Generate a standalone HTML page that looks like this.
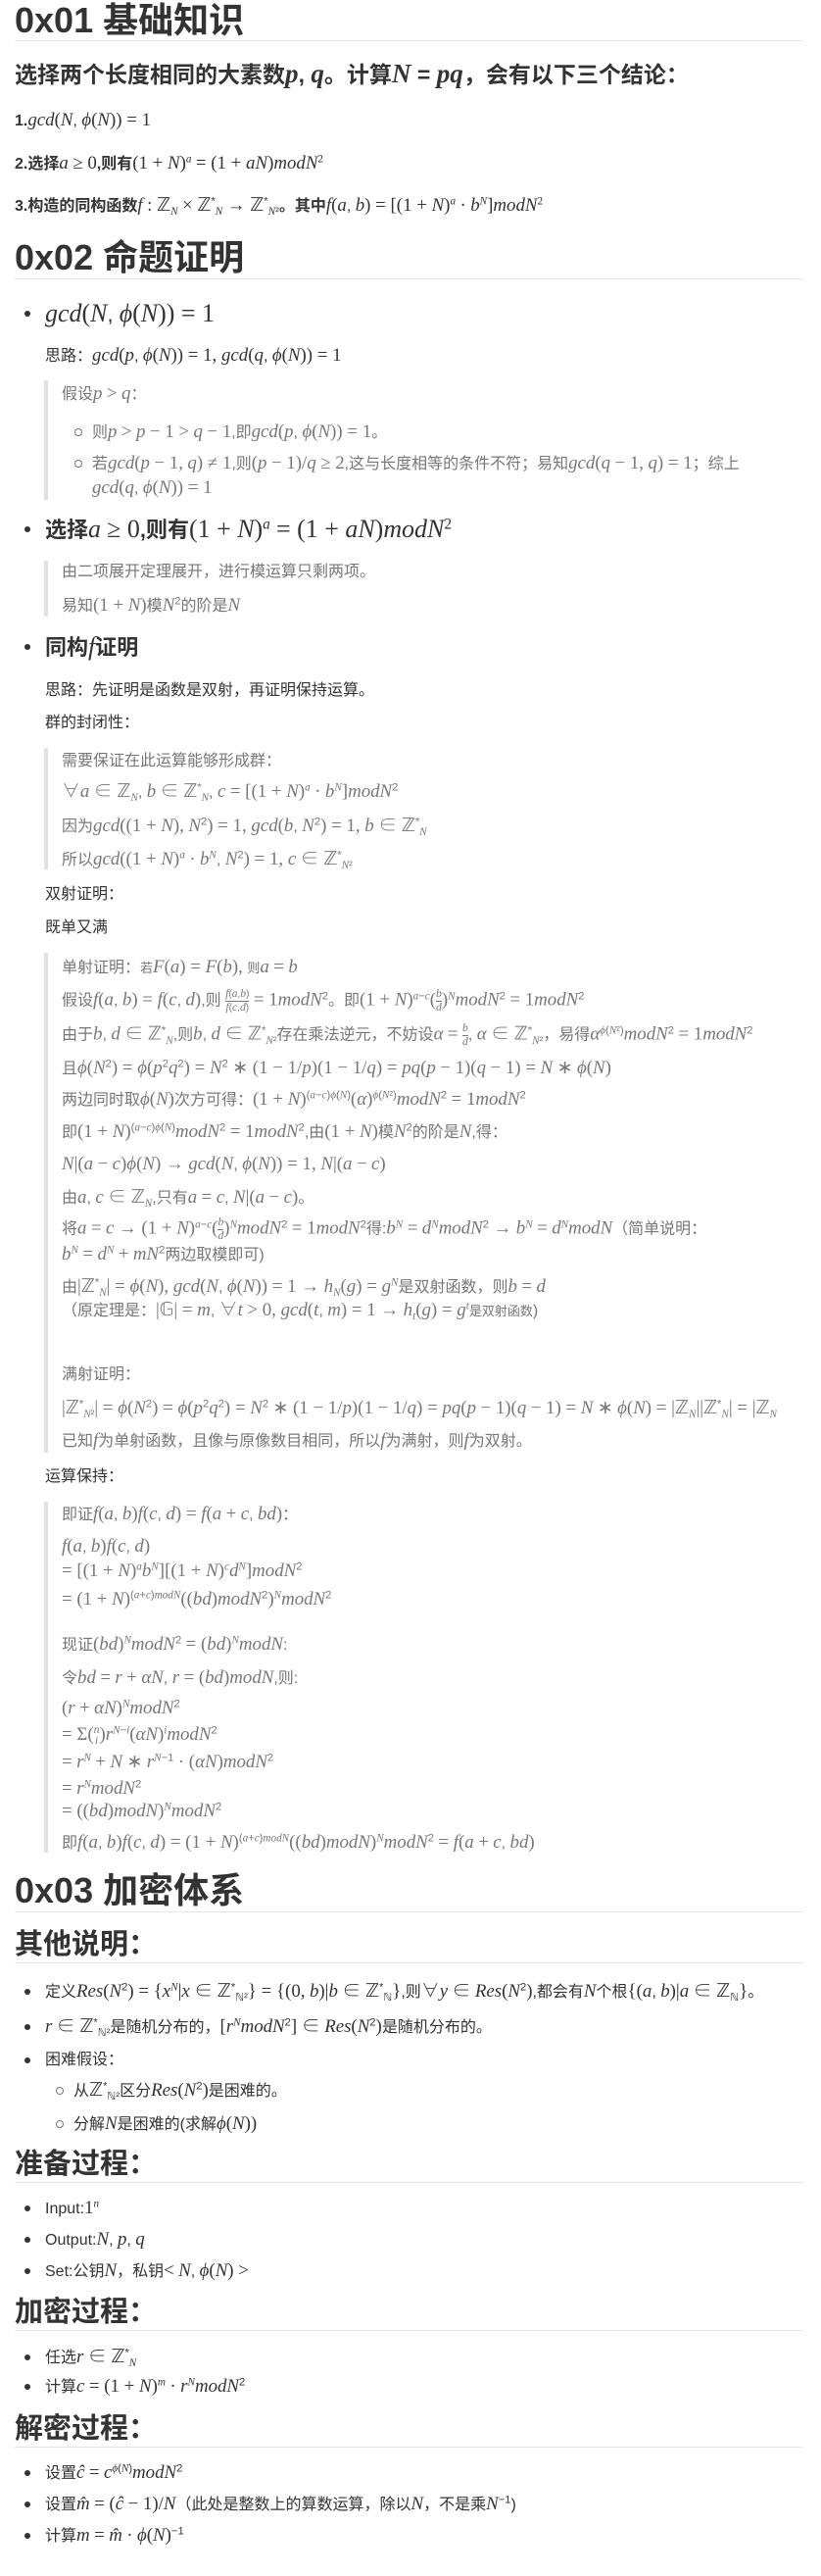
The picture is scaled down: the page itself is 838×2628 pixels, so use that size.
<!DOCTYPE html>
<html><head><meta charset="utf-8">
<style>
html,body{margin:0;padding:0;background:#fff;}
body{width:838px;height:2628px;position:relative;overflow:hidden;font-family:"Liberation Sans","Noto Sans CJK SC",sans-serif;color:#333;}
.t{position:absolute;white-space:nowrap;font-size:16px;line-height:24px;}
.g{color:#777;}
i,.m{font-family:"Liberation Serif","Noto Serif CJK SC",serif;font-size:1.18em;}
.m{font-style:normal;}
sup,sub{font-size:0.7em;line-height:0;}
sup i,sub i,sup .m,sub .m{font-size:1em;}
.h1{font-size:36px;font-weight:bold;line-height:42px;}
.h2{font-size:29px;font-weight:bold;line-height:36px;}
.hr{position:absolute;left:15px;width:805px;height:1px;background:#e6e6e6;}
.bq{position:absolute;left:45px;width:4px;background:#dfe2e5;}
.b{position:absolute;width:6px;height:6px;border-radius:50%;background:#333;}
.c{position:absolute;width:6px;height:6px;border-radius:50%;border:1px solid #777;}
.bold{font-weight:bold;}
.fr{display:inline-block;vertical-align:middle;text-align:center;font-size:0.62em;line-height:1.1;}
.fr span{display:block;}
.fr span:first-child{border-bottom:1px solid currentColor;}
</style></head><body>

<div class="t h1" style="left:15px;top:0px;">0x01 基础知识</div>
<div class="hr" style="top:41px;"></div>
<div class="t bold" style="left:15px;top:60px;font-size:23px;line-height:30px;">选择两个长度相同的大素数<i>p</i>, <i>q</i>。计算<i>N</i> = <i>pq</i>，会有以下三个结论：</div>
<div class="t bold" style="left:15px;top:111px;">1.<span style="font-weight:normal"><i>gcd</i><span class="m">(</span><i>N</i>, <i>ϕ</i><span class="m">(</span><i>N</i><span class="m">)) = 1</span></span></div>
<div class="t bold" style="left:15px;top:155px;">2.选择<span style="font-weight:normal"><i>a</i> <span class="m">≥ 0</span></span>,则有<span style="font-weight:normal"><span class="m">(1 + </span><i>N</i><span class="m">)</span><sup><i>a</i></sup> <span class="m">= (1 + </span><i>aN</i><span class="m">)</span><i>modN</i><sup><span class="m">2</span></sup></span></div>
<div class="t bold" style="left:15px;top:198px;">3.构造的同构函数<span style="font-weight:normal"><i>f</i> <span class="m">: ℤ</span><sub><i>N</i></sub> <span class="m">× ℤ</span><sup>*</sup><sub><i>N</i></sub> <span class="m">→ ℤ</span><sup>*</sup><sub><i>N</i>²</sub></span>。其中<span style="font-weight:normal"><i>f</i><span class="m">(</span><i>a</i>, <i>b</i><span class="m">) = [(1 + </span><i>N</i><span class="m">)</span><sup><i>a</i></sup> <span class="m">·</span> <i>b</i><sup><i>N</i></sup><span class="m">]</span><i>modN</i><sup><span class="m">2</span></sup></span></div>

<div class="t h1" style="left:15px;top:242px;">0x02 命题证明</div>
<div class="hr" style="top:284px;"></div>
<div class="b" style="left:25px;top:317px;"></div>
<div class="t" style="left:46px;top:305px;font-size:22px;line-height:30px;"><i>gcd</i><span class="m">(</span><i>N</i>, <i>ϕ</i><span class="m">(</span><i>N</i><span class="m">)) = 1</span></div>
<div class="t" style="left:46px;top:351px;">思路：<i>gcd</i><span class="m">(</span><i>p</i>, <i>ϕ</i><span class="m">(</span><i>N</i><span class="m">)) = 1, </span><i>gcd</i><span class="m">(</span><i>q</i>, <i>ϕ</i><span class="m">(</span><i>N</i><span class="m">)) = 1</span></div>
<div class="bq" style="top:388px;height:122px;"></div>
<div class="t g" style="left:63px;top:390px;">假设<i>p</i> <span class="m">&gt;</span> <i>q</i>：</div>
<div class="c" style="left:76px;top:437px;"></div>
<div class="t g" style="left:94px;top:429px;">则<i>p</i> <span class="m">&gt;</span> <i>p</i> <span class="m">− 1 &gt;</span> <i>q</i> <span class="m">− 1</span>,即<i>gcd</i><span class="m">(</span><i>p</i>, <i>ϕ</i><span class="m">(</span><i>N</i><span class="m">)) = 1</span>。</div>
<div class="c" style="left:76px;top:469px;"></div>
<div class="t g" style="left:94px;top:461px;">若<i>gcd</i><span class="m">(</span><i>p</i> <span class="m">− 1,</span> <i>q</i><span class="m">) ≠ 1</span>,则<span class="m">(</span><i>p</i> <span class="m">− 1)/</span><i>q</i> <span class="m">≥ 2</span>,这与长度相等的条件不符；易知<i>gcd</i><span class="m">(</span><i>q</i> <span class="m">− 1,</span> <i>q</i><span class="m">) = 1</span>；综上</div>
<div class="t g" style="left:94px;top:486px;"><i>gcd</i><span class="m">(</span><i>q</i>, <i>ϕ</i><span class="m">(</span><i>N</i><span class="m">)) = 1</span></div>

<div class="b" style="left:25px;top:537px;"></div>
<div class="t bold" style="left:46px;top:525px;font-size:22px;line-height:30px;">选择<span style="font-weight:normal"><i>a</i> <span class="m">≥ 0</span></span>,则有<span style="font-weight:normal"><span class="m">(1 + </span><i>N</i><span class="m">)</span><sup><i>a</i></sup> <span class="m">= (1 + </span><i>aN</i><span class="m">)</span><i>modN</i><sup><span class="m">2</span></sup></span></div>
<div class="bq" style="top:572px;height:57px;"></div>
<div class="t g" style="left:63px;top:572px;">由二项展开定理展开，进行模运算只剩两项。</div>
<div class="t g" style="left:63px;top:606px;">易知<span class="m">(1 + </span><i>N</i><span class="m">)</span>模<i>N</i><sup>2</sup>的阶是<i>N</i></div>

<div class="b" style="left:25px;top:657px;"></div>
<div class="t bold" style="left:46px;top:645px;font-size:22px;line-height:30px;">同构<i style="font-weight:normal">f</i>证明</div>
<div class="t" style="left:46px;top:693px;">思路：先证明是函数是双射，再证明保持运算。</div>
<div class="t" style="left:46px;top:726px;">群的封闭性：</div>
<div class="bq" style="top:763px;height:124px;"></div>
<div class="t g" style="left:63px;top:765px;">需要保证在此运算能够形成群：</div>
<div class="t g" style="left:63px;top:796px;"><span class="m">∀</span><i>a</i> <span class="m">∈ ℤ</span><sub><i>N</i></sub>, <i>b</i> <span class="m">∈ ℤ</span><sup>*</sup><sub><i>N</i></sub>, <i>c</i> <span class="m">= [(1 + </span><i>N</i><span class="m">)</span><sup><i>a</i></sup> <span class="m">·</span> <i>b</i><sup><i>N</i></sup><span class="m">]</span><i>modN</i><sup>2</sup></div>
<div class="t g" style="left:63px;top:831px;">因为<i>gcd</i><span class="m">((1 + </span><i>N</i><span class="m">),</span> <i>N</i><sup>2</sup><span class="m">) = 1, </span><i>gcd</i><span class="m">(</span><i>b</i>, <i>N</i><sup>2</sup><span class="m">) = 1, </span><i>b</i> <span class="m">∈ ℤ</span><sup>*</sup><sub><i>N</i></sub></div>
<div class="t g" style="left:63px;top:865px;">所以<i>gcd</i><span class="m">((1 + </span><i>N</i><span class="m">)</span><sup><i>a</i></sup> <span class="m">·</span> <i>b</i><sup><i>N</i></sup>, <i>N</i><sup>2</sup><span class="m">) = 1, </span><i>c</i> <span class="m">∈ ℤ</span><sup>*</sup><sub><i>N</i>²</sub></div>
<div class="t" style="left:46px;top:901px;">双射证明：</div>
<div class="t" style="left:46px;top:935px;">既单又满</div>

<div class="bq" style="top:972px;height:510px;"></div>
<div class="t g" style="left:63px;top:975px;">单射证明：<span style="font-size:13px">若</span><i>F</i><span class="m">(</span><i>a</i><span class="m">) = </span><i>F</i><span class="m">(</span><i>b</i><span class="m">),</span> <span style="font-size:13px">则</span><i>a</i> <span class="m">=</span> <i>b</i></div>
<div class="t g" style="left:63px;top:1008px;">假设<i>f</i><span class="m">(</span><i>a</i>, <i>b</i><span class="m">) = </span><i>f</i><span class="m">(</span><i>c</i>, <i>d</i><span class="m">)</span>,则 <span class="fr"><span><i>f</i>(<i>a</i>,<i>b</i>)</span><span><i>f</i>(<i>c</i>,<i>d</i>)</span></span> <span class="m">= 1</span><i>modN</i><sup>2</sup>。即<span class="m">(1 + </span><i>N</i><span class="m">)</span><sup><i>a</i>−<i>c</i></sup><span class="m">(</span><span class="fr"><span><i>b</i></span><span><i>d</i></span></span><span class="m">)</span><sup><i>N</i></sup><i>modN</i><sup>2</sup> <span class="m">= 1</span><i>modN</i><sup>2</sup></div>
<div class="t g" style="left:63px;top:1043px;">由于<i>b</i>, <i>d</i> <span class="m">∈ ℤ</span><sup>*</sup><sub><i>N</i></sub>,则<i>b</i>, <i>d</i> <span class="m">∈ ℤ</span><sup>*</sup><sub><i>N</i>²</sub>存在乘法逆元，不妨设<i>α</i> <span class="m">=</span> <span class="fr"><span><i>b</i></span><span><i>d</i></span></span>, <i>α</i> <span class="m">∈ ℤ</span><sup>*</sup><sub><i>N</i>²</sub>，易得<i>α</i><sup><i>ϕ</i>(<i>N</i>²)</sup><i>modN</i><sup>2</sup> <span class="m">= 1</span><i>modN</i><sup>2</sup></div>
<div class="t g" style="left:63px;top:1078px;">且<i>ϕ</i><span class="m">(</span><i>N</i><sup>2</sup><span class="m">) = </span><i>ϕ</i><span class="m">(</span><i>p</i><sup>2</sup><i>q</i><sup>2</sup><span class="m">) = </span><i>N</i><sup>2</sup> <span class="m">∗ (1 − 1/</span><i>p</i><span class="m">)(1 − 1/</span><i>q</i><span class="m">) = </span><i>pq</i><span class="m">(</span><i>p</i> <span class="m">− 1)(</span><i>q</i> <span class="m">− 1) = </span><i>N</i> <span class="m">∗</span> <i>ϕ</i><span class="m">(</span><i>N</i><span class="m">)</span></div>
<div class="t g" style="left:63px;top:1110px;">两边同时取<i>ϕ</i><span class="m">(</span><i>N</i><span class="m">)</span>次方可得：<span class="m">(1 + </span><i>N</i><span class="m">)</span><sup>(<i>a</i>−<i>c</i>)<i>ϕ</i>(<i>N</i>)</sup><span class="m">(</span><i>α</i><span class="m">)</span><sup><i>ϕ</i>(<i>N</i>²)</sup><i>modN</i><sup>2</sup> <span class="m">= 1</span><i>modN</i><sup>2</sup></div>
<div class="t g" style="left:63px;top:1143px;">即<span class="m">(1 + </span><i>N</i><span class="m">)</span><sup>(<i>a</i>−<i>c</i>)<i>ϕ</i>(<i>N</i>)</sup><i>modN</i><sup>2</sup> <span class="m">= 1</span><i>modN</i><sup>2</sup>,由<span class="m">(1 + </span><i>N</i><span class="m">)</span>模<i>N</i><sup>2</sup>的阶是<i>N</i>,得：</div>
<div class="t g" style="left:63px;top:1176px;"><i>N</i><span class="m">|(</span><i>a</i> <span class="m">−</span> <i>c</i><span class="m">)</span><i>ϕ</i><span class="m">(</span><i>N</i><span class="m">) →</span> <i>gcd</i><span class="m">(</span><i>N</i>, <i>ϕ</i><span class="m">(</span><i>N</i><span class="m">)) = 1, </span><i>N</i><span class="m">|(</span><i>a</i> <span class="m">−</span> <i>c</i><span class="m">)</span></div>
<div class="t g" style="left:63px;top:1210px;">由<i>a</i>, <i>c</i> <span class="m">∈ ℤ</span><sub><i>N</i></sub>,只有<i>a</i> <span class="m">=</span> <i>c</i>, <i>N</i><span class="m">|(</span><i>a</i> <span class="m">−</span> <i>c</i><span class="m">)</span>。</div>
<div class="t g" style="left:63px;top:1241px;">将<i>a</i> <span class="m">=</span> <i>c</i> <span class="m">→ (1 + </span><i>N</i><span class="m">)</span><sup><i>a</i>−<i>c</i></sup><span class="m">(</span><span class="fr"><span><i>b</i></span><span><i>d</i></span></span><span class="m">)</span><sup><i>N</i></sup><i>modN</i><sup>2</sup> <span class="m">= 1</span><i>modN</i><sup>2</sup>得:<i>b</i><sup><i>N</i></sup> <span class="m">=</span> <i>d</i><sup><i>N</i></sup><i>modN</i><sup>2</sup> <span class="m">→</span> <i>b</i><sup><i>N</i></sup> <span class="m">=</span> <i>d</i><sup><i>N</i></sup><i>modN</i>（简单说明：</div>
<div class="t g" style="left:63px;top:1268px;"><i>b</i><sup><i>N</i></sup> <span class="m">=</span> <i>d</i><sup><i>N</i></sup> <span class="m">+</span> <i>mN</i><sup>2</sup>两边取模即可)</div>
<div class="t g" style="left:63px;top:1301px;">由<span class="m">|ℤ</span><sup>*</sup><sub><i>N</i></sub><span class="m">| = </span><i>ϕ</i><span class="m">(</span><i>N</i><span class="m">), </span><i>gcd</i><span class="m">(</span><i>N</i>, <i>ϕ</i><span class="m">(</span><i>N</i><span class="m">)) = 1 →</span> <i>h</i><sub><i>N</i></sub><span class="m">(</span><i>g</i><span class="m">) = </span><i>g</i><sup><i>N</i></sup>是双射函数，则<i>b</i> <span class="m">=</span> <i>d</i></div>
<div class="t g" style="left:63px;top:1325px;">（原定理是：<span class="m">|𝔾| = </span><i>m</i>, <span class="m">∀</span><i>t</i> <span class="m">&gt; 0, </span><i>gcd</i><span class="m">(</span><i>t</i>, <i>m</i><span class="m">) = 1 →</span> <i>h</i><sub><i>t</i></sub><span class="m">(</span><i>g</i><span class="m">) = </span><i>g</i><sup><i>t</i></sup><span style="font-size:13px">是双射函数</span>)</div>
<div class="t g" style="left:63px;top:1391px;">满射证明：</div>
<div class="t g" style="left:63px;top:1425px;"><span class="m">|ℤ</span><sup>*</sup><sub><i>N</i>²</sub><span class="m">| = </span><i>ϕ</i><span class="m">(</span><i>N</i><sup>2</sup><span class="m">) = </span><i>ϕ</i><span class="m">(</span><i>p</i><sup>2</sup><i>q</i><sup>2</sup><span class="m">) = </span><i>N</i><sup>2</sup> <span class="m">∗ (1 − 1/</span><i>p</i><span class="m">)(1 − 1/</span><i>q</i><span class="m">) = </span><i>pq</i><span class="m">(</span><i>p</i> <span class="m">− 1)(</span><i>q</i> <span class="m">− 1) = </span><i>N</i> <span class="m">∗</span> <i>ϕ</i><span class="m">(</span><i>N</i><span class="m">) = |ℤ</span><sub><i>N</i></sub><span class="m">||ℤ</span><sup>*</sup><sub><i>N</i></sub><span class="m">| = |ℤ</span><sub><i>N</i></sub></div>
<div class="t g" style="left:63px;top:1458px;">已知<i>f</i>为单射函数，且像与原像数目相同，所以<i>f</i>为满射，则<i>f</i>为双射。</div>

<div class="t" style="left:46px;top:1495px;">运算保持：</div>
<div class="bq" style="top:1532px;height:358px;"></div>
<div class="t g" style="left:63px;top:1533px;">即证<i>f</i><span class="m">(</span><i>a</i>, <i>b</i><span class="m">)</span><i>f</i><span class="m">(</span><i>c</i>, <i>d</i><span class="m">) = </span><i>f</i><span class="m">(</span><i>a</i> <span class="m">+</span> <i>c</i>, <i>bd</i><span class="m">)</span>：</div>
<div class="t g" style="left:63px;top:1566px;"><i>f</i><span class="m">(</span><i>a</i>, <i>b</i><span class="m">)</span><i>f</i><span class="m">(</span><i>c</i>, <i>d</i><span class="m">)</span></div>
<div class="t g" style="left:63px;top:1591px;"><span class="m">= [(1 + </span><i>N</i><span class="m">)</span><sup><i>a</i></sup><i>b</i><sup><i>N</i></sup><span class="m">][(1 + </span><i>N</i><span class="m">)</span><sup><i>c</i></sup><i>d</i><sup><i>N</i></sup><span class="m">]</span><i>modN</i><sup>2</sup></div>
<div class="t g" style="left:63px;top:1620px;"><span class="m">= (1 + </span><i>N</i><span class="m">)</span><sup>(<i>a</i>+<i>c</i>)<i>modN</i></sup><span class="m">((</span><i>bd</i><span class="m">)</span><i>modN</i><sup>2</sup><span class="m">)</span><sup><i>N</i></sup><i>modN</i><sup>2</sup></div>
<div class="t g" style="left:63px;top:1666px;">现证<span class="m">(</span><i>bd</i><span class="m">)</span><sup><i>N</i></sup><i>modN</i><sup>2</sup> <span class="m">= (</span><i>bd</i><span class="m">)</span><sup><i>N</i></sup><i>modN</i>:</div>
<div class="t g" style="left:63px;top:1700px;">令<i>bd</i> <span class="m">=</span> <i>r</i> <span class="m">+</span> <i>αN</i>, <i>r</i> <span class="m">= (</span><i>bd</i><span class="m">)</span><i>modN</i>,则:</div>
<div class="t g" style="left:63px;top:1731px;"><span class="m">(</span><i>r</i> <span class="m">+</span> <i>αN</i><span class="m">)</span><sup><i>N</i></sup><i>modN</i><sup>2</sup></div>
<div class="t g" style="left:63px;top:1758px;"><span class="m">= Σ(</span><span class="fr" style="line-height:0.9"><i>n</i><br><i>i</i></span><span class="m">)</span><i>r</i><sup><i>N</i>−<i>i</i></sup><span class="m">(</span><i>αN</i><span class="m">)</span><sup><i>i</i></sup><i>modN</i><sup>2</sup></div>
<div class="t g" style="left:63px;top:1786px;"><span class="m">=</span> <i>r</i><sup><i>N</i></sup> <span class="m">+</span> <i>N</i> <span class="m">∗</span> <i>r</i><sup><i>N</i>−1</sup> <span class="m">· (</span><i>αN</i><span class="m">)</span><i>modN</i><sup>2</sup></div>
<div class="t g" style="left:63px;top:1813px;"><span class="m">=</span> <i>r</i><sup><i>N</i></sup><i>modN</i><sup>2</sup></div>
<div class="t g" style="left:63px;top:1836px;"><span class="m">= ((</span><i>bd</i><span class="m">)</span><i>modN</i><span class="m">)</span><sup><i>N</i></sup><i>modN</i><sup>2</sup></div>
<div class="t g" style="left:63px;top:1868px;">即<i>f</i><span class="m">(</span><i>a</i>, <i>b</i><span class="m">)</span><i>f</i><span class="m">(</span><i>c</i>, <i>d</i><span class="m">) = (1 + </span><i>N</i><span class="m">)</span><sup>(<i>a</i>+<i>c</i>)<i>modN</i></sup><span class="m">((</span><i>bd</i><span class="m">)</span><i>modN</i><span class="m">)</span><sup><i>N</i></sup><i>modN</i><sup>2</sup> <span class="m">= </span><i>f</i><span class="m">(</span><i>a</i> <span class="m">+</span> <i>c</i>, <i>bd</i><span class="m">)</span></div>

<div class="t h1" style="left:15px;top:1908px;">0x03 加密体系</div>
<div class="hr" style="top:1950px;"></div>
<div class="t h2" style="left:15px;top:1966px;">其他说明：</div>
<div class="hr" style="top:2002px;"></div>
<div class="b" style="left:25px;top:2029px;"></div>
<div class="t" style="left:46px;top:2020px;">定义<i>Res</i><span class="m">(</span><i>N</i><sup>2</sup><span class="m">) = {</span><i>x</i><sup><i>N</i></sup><span class="m">|</span><i>x</i> <span class="m">∈ ℤ</span><sup>*</sup><sub>ℕ²</sub><span class="m">} = {(0,</span> <i>b</i><span class="m">)|</span><i>b</i> <span class="m">∈ ℤ</span><sup>*</sup><sub>ℕ</sub><span class="m">}</span>,则<span class="m">∀</span><i>y</i> <span class="m">∈</span> <i>Res</i><span class="m">(</span><i>N</i><sup>2</sup><span class="m">)</span>,都会有<i>N</i>个根<span class="m">{(</span><i>a</i>, <i>b</i><span class="m">)|</span><i>a</i> <span class="m">∈ ℤ</span><sub>ℕ</sub><span class="m">}</span>。</div>
<div class="b" style="left:25px;top:2065px;"></div>
<div class="t" style="left:46px;top:2056px;"><i>r</i> <span class="m">∈ ℤ</span><sup>*</sup><sub>ℕ²</sub>是随机分布的，<span class="m">[</span><i>r</i><sup><i>N</i></sup><i>modN</i><sup>2</sup><span class="m">] ∈</span> <i>Res</i><span class="m">(</span><i>N</i><sup>2</sup><span class="m">)</span>是随机分布的。</div>
<div class="b" style="left:25px;top:2099px;"></div>
<div class="t" style="left:46px;top:2090px;">困难假设：</div>
<div class="c" style="left:57px;top:2129px;"></div>
<div class="t" style="left:75px;top:2121px;">从<span class="m">ℤ</span><sup>*</sup><sub>ℕ²</sub>区分<i>Res</i><span class="m">(</span><i>N</i><sup>2</sup><span class="m">)</span>是困难的。</div>
<div class="c" style="left:57px;top:2163px;"></div>
<div class="t" style="left:75px;top:2155px;">分解<i>N</i>是困难的(求解<i>ϕ</i><span class="m">(</span><i>N</i><span class="m">))</span></div>

<div class="t h2" style="left:15px;top:2190px;">准备过程：</div>
<div class="hr" style="top:2226px;"></div>
<div class="b" style="left:25px;top:2250px;"></div>
<div class="t" style="left:46px;top:2241px;">Input:<span class="m">1</span><sup><i>n</i></sup></div>
<div class="b" style="left:25px;top:2282px;"></div>
<div class="t" style="left:46px;top:2273px;">Output:<i>N</i>, <i>p</i>, <i>q</i></div>
<div class="b" style="left:25px;top:2314px;"></div>
<div class="t" style="left:46px;top:2305px;">Set:公钥<i>N</i>，私钥<span class="m">&lt;</span> <i>N</i>, <i>ϕ</i><span class="m">(</span><i>N</i><span class="m">) &gt;</span></div>

<div class="t h2" style="left:15px;top:2341px;">加密过程：</div>
<div class="hr" style="top:2377px;"></div>
<div class="b" style="left:25px;top:2402px;"></div>
<div class="t" style="left:46px;top:2393px;">任选<i>r</i> <span class="m">∈ ℤ</span><sup>*</sup><sub><i>N</i></sub></div>
<div class="b" style="left:25px;top:2432px;"></div>
<div class="t" style="left:46px;top:2423px;">计算<i>c</i> <span class="m">= (1 + </span><i>N</i><span class="m">)</span><sup><i>m</i></sup> <span class="m">·</span> <i>r</i><sup><i>N</i></sup><i>modN</i><sup>2</sup></div>

<div class="t h2" style="left:15px;top:2460px;">解密过程：</div>
<div class="hr" style="top:2496px;"></div>
<div class="b" style="left:25px;top:2520px;"></div>
<div class="t" style="left:46px;top:2511px;">设置<i>ĉ</i> <span class="m">=</span> <i>c</i><sup><i>ϕ</i>(<i>N</i>)</sup><i>modN</i><sup>2</sup></div>
<div class="b" style="left:25px;top:2552px;"></div>
<div class="t" style="left:46px;top:2543px;">设置<i>m̂</i> <span class="m">= (</span><i>ĉ</i> <span class="m">− 1)/</span><i>N</i>（此处是整数上的算数运算，除以<i>N</i>，不是乘<i>N</i><sup>−1</sup>)</div>
<div class="b" style="left:25px;top:2584px;"></div>
<div class="t" style="left:46px;top:2575px;">计算<i>m</i> <span class="m">=</span> <i>m̂</i> <span class="m">·</span> <i>ϕ</i><span class="m">(</span><i>N</i><span class="m">)</span><sup>−1</sup></div>

</body></html>
